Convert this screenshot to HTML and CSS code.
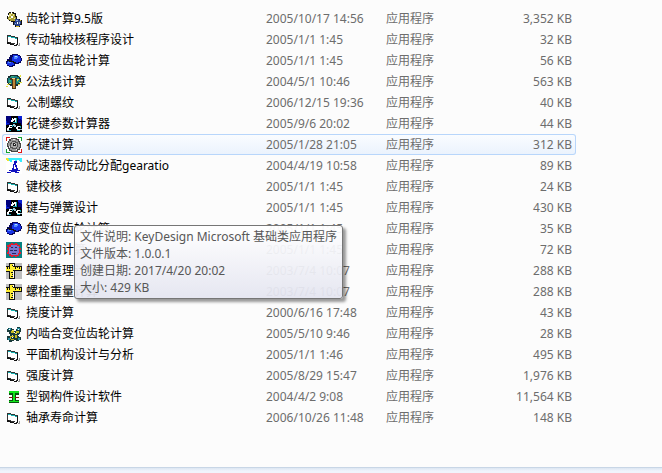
FILE: index.html
```html
<!DOCTYPE html>
<html lang="zh-CN">
<head>
  <meta charset="UTF-8" />
  <meta name="viewport" content="width=device-width, initial-scale=1.0"/>
  <title>机械设计计算</title>
  <link rel="stylesheet" href="styles.css">
</head>
<body>

  <!-- ICONS -->
  <svg class="sprite" aria-hidden="true">
    <symbol id="gears" viewBox="0 0 16 16">
      <path fill="#111" d="M3 1h5v1h2v3h1v3h3v1h2v5h-2v2H9v-2H7v-3H5v-1H3V9H2V8H1V5h1V2h1z"/>
      <path fill="#a69d35" d="M3 2h4v1h2v3h1v3H8v1H4V9H2V5h1z"/>
      <path fill="#e9e38b" d="M3 3h2v2H3zM7 3h1v2H7zM3 7h2v1H3zM8 7h1v1H8z"/>
      <path fill="#fff" d="M5 1h1v2H5zM2 4h1v2H2zM5 5h2v2H5z"/>
      <path fill="#26418b" d="M9 8h4v1h2v4h-1v2h-4v-1H8v-3h1z"/>
      <path fill="#8aa7d5" d="M10 9h2v1h-2zM13 11h1v2h-1zM9 12h1v1H9z"/>
      <path fill="#fff" d="M11 11h1v2h-1z"/>
      <path fill="#d9bd22" d="M8 9h1v1H8zM10 15h3v1h-3zM14 9h1v1h-1z"/>
    </symbol>
    <symbol id="form" viewBox="0 0 16 16">
      <path fill="#333" d="M1 3h4v1h4v1h3v8h-2v-1H5v-1H1z"/>
      <path fill="#fff" d="M2 5h3v1h4v1h2v5H9v-1H5v-1H2z"/>
      <path fill="#14b5b5" d="M2 4h3v1h4v1h2v1H9V6H5V5H2z"/>
      <path fill="#111" d="M1 10h2v1h2v1h3v1h3v1H8v-1H4v-1H1zM11 6h1v7h-1z"/>
      <path fill="#999" d="M13 11h1v3h-2v-1h1z"/>
    </symbol>
    <symbol id="ball" viewBox="0 0 16 16">
      <path fill="#06065c" d="M6 1h6v1h2v1h1v2h1v3h-1v2h-2v1H9v2H7v1H3v-1H1v-2H0V8h1V6h2V4h1V2h2z"/>
      <path fill="#1834e8" d="M7 2h5v1h2v2h1v3h-1v1h-2v1H8V9H6V4h1zM2 8h3v1h2v1h1v2H6v1H3v-1H1V9h1z"/>
      <path fill="#5289ff" d="M8 3h4v2h-1v1H8zM2 9h3v1H2z"/>
      <path fill="#b3dcff" d="M9 3h2v1H9z"/>
      <path fill="#111" d="M1 7h3v1h4v1h2v1H7V9H3V8H1z"/>
    </symbol>
    <symbol id="globe" viewBox="0 0 16 16">
      <path fill="#182f32" d="M4 1h8v1h2v2h1v5h-1v2h-2v1H4v-1H2V9H1V4h1V2h2z"/>
      <path fill="#178080" d="M5 2h6v1h2v2h1v4h-2v1H4V9H2V4h2z"/>
      <path fill="#e2df43" d="M14 1h1v2h-2V2h1zM11 5h2v1h-1v1h-1zM1 10h2v1H1zM3 9h2v1H3zM0 12h2v1H0zM13 8h3v1h-3zM12 10h2v1h-2z"/>
      <path fill="#4a3719" d="M4 4h7v1h-1v10H6V6H4z"/>
      <path fill="#c08536" d="M7 5h2v9H7z"/>
      <path fill="#e9d091" d="M6 4h3v1H6z"/>
      <path fill="#36ad83" d="M5 2h3v1H5zM11 7h2v1h-2zM3 6h2v2H3z"/>
    </symbol>
    <symbol id="mfc" viewBox="0 0 16 16">
      <path fill="#00007b" d="M0 0h16v16H0z"/>
      <path fill="#000" d="M5 0h7v7h3v2h1v7H0V9h4V6h1z"/>
      <path fill="#fff" d="M6 2h1v1h1V2h2v4H9V4H8v1H7v1H5V4h1zM3 9h3v1H4v1h2v1H3v2H1v-2h1v-1h1zM11 10h3v1h-2v2h3v1h-4v-1h-1v-2h1z"/>
      <path fill="#18a8b8" d="M10 2h1v5H9V6h1zM7 6h2v1H7zM6 9h1v2H6zM3 14h2v1H3zM14 10h1v2h-1zM11 14h3v1h-3z"/>
      <path fill="#a8cbd9" d="M7 8h2v1h1v2H8v-1H7zM1 14h2v1H1zM14 13h2v1h-2z"/>
      <path fill="#0821d6" d="M12 0h4v4h-1V3h-2V2h-1zM0 5h1v2h2v1H1v1H0z"/>
    </symbol>
    <symbol id="wheel" viewBox="0 0 16 16">
      <path fill="#fff" d="M0 0h16v16H0z"/>
      <path fill="#e01818" d="M0 0h4v1H1v3H0zM12 15h3v-3h1v4h-4z"/>
      <path fill="#15a235" d="M12 0h4v4h-1V1h-3zM0 12h1v3h3v1H0z"/>
      <path fill="#444" d="M5 1h6v1h2v2h1v2h1v5h-1v2h-2v2H5v-1H3v-2H2v-2H1V6h1V4h1V2h2z"/>
      <path fill="#999" d="M5 2h5v1h2v2h1v2h1v3h-1v2h-2v2H6v-1H4v-2H3V9H2V6h1V4h2z"/>
      <path fill="#555" d="M6 4h4v1h2v5h-1v2H6v-1H4V6h1V5h1z"/>
      <path fill="#aaa" d="M6 5h3v1h2v4h-1v1H7v-1H5V7h1z"/>
      <path fill="#222" d="M7 6h2v1h1v2H7z"/>
      <path fill="#eee" d="M7 2h2v1H7zM3 9h1v2H3zM10 12h1v1h-1zM8 7h1v1H8z"/>
    </symbol>
    <symbol id="reducer" viewBox="0 0 16 16">
      <path fill="#fff" d="M0 0h16v16H0z"/>
      <path fill="#35edff" d="M2 0h14v4h-2V3h-1V2h-2v1H9V2H6v2H4V3H2z"/>
      <path fill="#f2e22e" d="M0 0h2v1h1v2H1V2H0z"/>
      <path fill="#1212c0" d="M8 3h3v2h-1v2h1v3h1v2h2v1h-3v1H5v-1H3v-1h3v-2h1V6h1z"/>
      <path fill="#fff" d="M8 7h1v2h1v2H8z"/>
      <path fill="#1212c0" d="M1 14h4v1H1zM9 14h4v1H9z"/>
    </symbol>
    <symbol id="chain" viewBox="0 0 16 16">
      <path fill="#078181" d="M0 0h16v16H0z"/>
      <path fill="#e01b31" d="M5 1h2v1h2V1h2v1h1v1h2v2h-1v1h2v2h-1v2h1v2h-2v2h-2v1H9v-1H7v1H5v-1H3v-2H1v-2h1V8H1V6h1V5H1V3h2V2h2z"/>
      <path fill="#7777ce" d="M5 3h6v1h2v7h-1v2H5v-1H3V5h2z"/>
      <path fill="#222666" d="M5 5h2v1H5zM9 5h2v1H9zM4 8h3v1H4zM8 8h3v1H8zM6 11h4v1H6z"/>
    </symbol>
    <symbol id="caliper" viewBox="0 0 16 16">
      <path fill="#bdbdbd" d="M0 0h16v16H0z"/>
      <path fill="#111" d="M3 0h6v3h7v5H9v8H3V9H0V3h3z"/>
      <path fill="#ffef31" d="M4 1h3v3h8v3H7v8H4V8H0V4h4z"/>
      <path fill="#111" d="M1 4h1v2H1zM3 4h1v2H3zM9 4h1v2H9zM11 4h1v1h-1zM13 4h1v2h-1zM6 2h1v1H6zM5 9h2v1H5zM6 11h1v1H6zM5 13h2v1H5z"/>
      <path fill="#fff" d="M7 1h1v2H7zM7 8h1v7H7z"/>
    </symbol>
    <symbol id="mesh" viewBox="0 0 16 16">
      <path fill="#193b3a" d="M2 2h4v1h2v2h2V3h1V1h3v1h1v4h-1v2h-1v3h2v3h-2v1h-3v-1H8v1H6v1H3v-2H1v-4h3V8H3V6H1V3h1z"/>
      <path fill="#258ca0" d="M3 2h2v2H2V3h1zM11 2h3v2h-3zM12 12h2v2h-2zM2 12h2v2H2z"/>
      <path fill="#c6ba20" d="M5 5h3v2H5zM10 5h3v2h-3zM4 10h4v1H5v2H4zM9 9h2v3H9zM5 13h3v1H5z"/>
      <path fill="#eee45d" d="M6 4h2v1H6zM9 7h2v1H9zM6 9h1v1H6z"/>
      <path fill="#fff" d="M3 3h1v1H3zM6 11h1v1H6zM12 3h1v1h-1zM12 9h1v1h-1zM8 6h1v1H8z"/>
    </symbol>
    <symbol id="beam" viewBox="0 0 16 16">
      <path fill="#07520c" d="M3 3h10v3h-3v5h3v3H3v-3h3V6H3z"/>
      <path fill="#13e51c" d="M3 2h10v2H9v8h4v1H3v-1h4V4H3z"/>
      <path fill="#7b1616" d="M3 8h4v1H3zM9 8h4v1H9z"/>
    </symbol>
  </svg>

  <main class="file-list">
    <table class="files">
      <colgroup>
        <col class="col-name">
        <col class="col-date">
        <col class="col-type">
        <col class="col-size">
      </colgroup>
      <tbody>
        <tr><td><span class="name"><svg class="icon"><use href="#gears"/></svg>齿轮计算9.5版</span></td><td>2005/10/17 14:56</td><td>应用程序</td><td>3,352 KB</td></tr>
        <tr><td><span class="name"><svg class="icon"><use href="#form"/></svg>传动轴校核程序设计</span></td><td>2005/1/1 1:45</td><td>应用程序</td><td>32 KB</td></tr>
        <tr><td><span class="name"><svg class="icon"><use href="#ball"/></svg>高变位齿轮计算</span></td><td>2005/1/1 1:45</td><td>应用程序</td><td>56 KB</td></tr>
        <tr><td><span class="name"><svg class="icon"><use href="#globe"/></svg>公法线计算</span></td><td>2004/5/1 10:46</td><td>应用程序</td><td>563 KB</td></tr>
        <tr><td><span class="name"><svg class="icon"><use href="#form"/></svg>公制螺纹</span></td><td>2006/12/15 19:36</td><td>应用程序</td><td>40 KB</td></tr>
        <tr><td><span class="name"><svg class="icon"><use href="#mfc"/></svg>花键参数计算器</span></td><td>2005/9/6 20:02</td><td>应用程序</td><td>44 KB</td></tr>
        <tr class="active"><td><span class="name"><svg class="icon"><use href="#wheel"/></svg>花键计算</span></td><td>2005/1/28 21:05</td><td>应用程序</td><td>312 KB</td></tr>
        <tr><td><span class="name"><svg class="icon"><use href="#reducer"/></svg>减速器传动比分配gearatio</span></td><td>2004/4/19 10:58</td><td>应用程序</td><td>89 KB</td></tr>
        <tr><td><span class="name"><svg class="icon"><use href="#form"/></svg>键校核</span></td><td>2005/1/1 1:45</td><td>应用程序</td><td>24 KB</td></tr>
        <tr>
          <td>
            <span class="name"><svg class="icon"><use href="#mfc"/></svg>键与弹簧设计</span>
            <div class="tooltip" role="tooltip">
              <p>文件说明: KeyDesign Microsoft 基础类应用程序</p>
              <p>文件版本: 1.0.0.1</p>
              <p>创建日期: 2017/4/20 20:02</p>
              <p>大小: 429 KB</p>
            </div>
          </td>
          <td>2005/1/1 1:45</td><td>应用程序</td><td>430 KB</td>
        </tr>
        <tr><td><span class="name"><svg class="icon"><use href="#ball"/></svg>角变位齿轮计算</span></td><td>2005/1/1 1:45</td><td>应用程序</td><td>35 KB</td></tr>
        <tr><td><span class="name"><svg class="icon"><use href="#chain"/></svg>链轮的计算</span></td><td>2005/1/1 1:45</td><td>应用程序</td><td>72 KB</td></tr>
        <tr><td><span class="name"><svg class="icon"><use href="#caliper"/></svg>螺栓重理计算</span></td><td>2003/7/4 10:07</td><td>应用程序</td><td>288 KB</td></tr>
        <tr><td><span class="name"><svg class="icon"><use href="#caliper"/></svg>螺栓重量计算</span></td><td>2003/7/4 10:07</td><td>应用程序</td><td>288 KB</td></tr>
        <tr><td><span class="name"><svg class="icon"><use href="#form"/></svg>挠度计算</span></td><td>2000/6/16 17:48</td><td>应用程序</td><td>43 KB</td></tr>
        <tr><td><span class="name"><svg class="icon"><use href="#mesh"/></svg>内啮合变位齿轮计算</span></td><td>2005/5/10 9:46</td><td>应用程序</td><td>28 KB</td></tr>
        <tr><td><span class="name"><svg class="icon"><use href="#form"/></svg>平面机构设计与分析</span></td><td>2005/1/1 1:46</td><td>应用程序</td><td>495 KB</td></tr>
        <tr><td><span class="name"><svg class="icon"><use href="#form"/></svg>强度计算</span></td><td>2005/8/29 15:47</td><td>应用程序</td><td>1,976 KB</td></tr>
        <tr><td><span class="name"><svg class="icon"><use href="#beam"/></svg>型钢构件设计软件</span></td><td>2004/4/2 9:08</td><td>应用程序</td><td>11,564 KB</td></tr>
        <tr><td><span class="name"><svg class="icon"><use href="#form"/></svg>轴承寿命计算</span></td><td>2006/10/26 11:48</td><td>应用程序</td><td>148 KB</td></tr>
      </tbody>
    </table>
  </main>

  <footer class="details-pane"></footer>

</body>
</html>
```
FILE: styles.css
```css
/* RESET & GLOBAL */
* {
  margin: 0; padding: 0; box-sizing: border-box;
}
body {
  display: flex; flex-direction: column;
  min-height: 100vh;
  background: #fcfcfc;
  color: #6d6d6d;
  font-family: 'Noto Sans', 'Noto Sans CJK SC', sans-serif;
  font-size: 12px; line-height: 17px;
}
.sprite {
  position: absolute;
  width: 0; height: 0;
}

/* FILE LIST */
.file-list {
  flex: 1;
  padding: 8px 86px 8px 2px;
}
.files {
  width: 100%;
  table-layout: fixed;
  border-collapse: separate; border-spacing: 0;
}
.col-date { width: 120px; }
.col-type { width: 92px; }
.col-size { width: 102px; }

.files td {
  position: relative;
  height: 21px;
  padding: 0 4px;
  border: 1px solid transparent;
  border-width: 1px 0;
  white-space: nowrap;
}
.files td:last-child { text-align: right; }

.name {
  display: flex; align-items: center; gap: 4px;
  color: #000;
}
.icon {
  flex: none;
  width: 16px; height: 16px;
  shape-rendering: crispEdges;
}

.active td {
  background: linear-gradient(#fafcff, #ebf3fd);
  background-clip: border-box;
  border-color: #b8d6fb;
}
.active td:first-child {
  padding-left: 3px;
  border-left-width: 1px;
  border-radius: 3px 0 0 3px;
}
.active td:last-child {
  padding-right: 3px;
  border-right-width: 1px;
  border-radius: 0 3px 3px 0;
}

/* TOOLTIP */
.tooltip {
  position: absolute; top: 27px; left: 72px;
  z-index: 10;
  padding: 2px 5px;
  border: 1px solid #767676;
  border-radius: 3px;
  background: linear-gradient(rgba(255,255,255,0.94), rgba(228,229,240,0.94));
  box-shadow: 3px 3px 3px rgba(0,0,0,0.4);
  color: #575757;
}

/* BOTTOM EDGE */
.details-pane {
  height: 6px;
  border-top: 1px solid #c8d6e6;
  background: linear-gradient(#dce6f2, #f0f4fc 3px);
}
```
